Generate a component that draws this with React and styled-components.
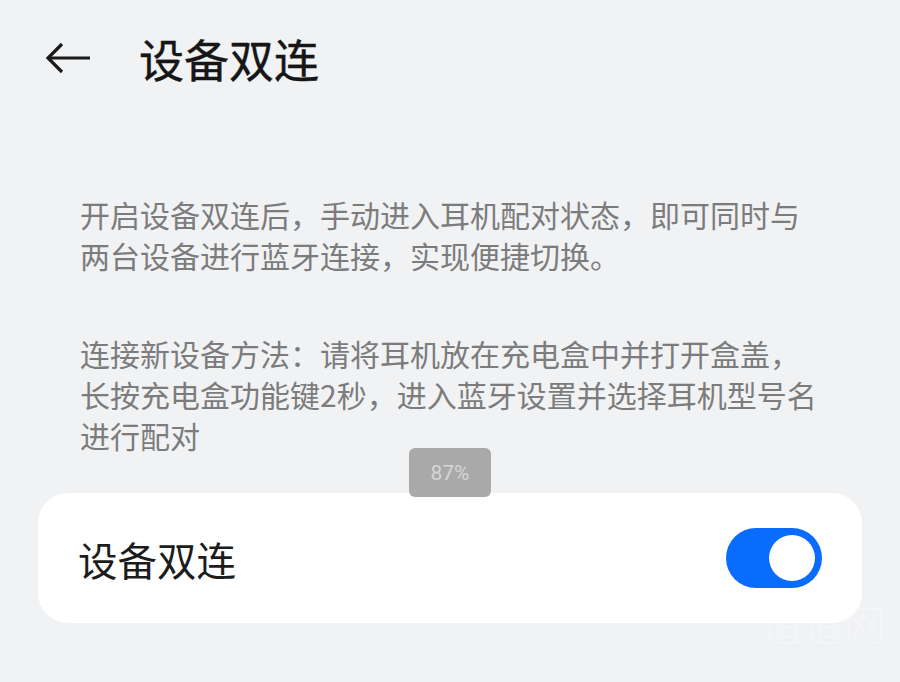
import React from "react";
import styled, { createGlobalStyle } from "styled-components";

const Global = createGlobalStyle`
  html, body { margin: 0; padding: 0; background: #f1f2f4; }
  body { font-family: "Noto Sans CJK SC", "Noto Sans", sans-serif; }
`;

const Page = styled.div`
  position: relative;
  width: 900px;
  height: 682px;
  background: #f1f2f4;
  overflow: hidden;
  display: flex;
  flex-direction: column;
`;

const Header = styled.header`
  height: 116px;
  display: flex;
  align-items: center;
  padding-left: 44px;
  gap: 45px;
`;

const BackButton = styled.button`
  border: 0;
  background: none;
  padding: 0;
  width: 50px;
  height: 40px;
  display: flex;
  align-items: center;
  color: #1a1a1a;
`;

const Title = styled.h1`
  margin: 0;
  font-size: 45px;
  font-weight: 400;
  color: #161616;
  line-height: 1;
  -webkit-text-stroke: 0.4px #161616;
`;

const Description = styled.p`
  margin: ${(p) => p.$top}px 0 0 80px;
  width: 745px;
  font-size: 30px;
  line-height: 41px;
  color: #7c7c7c;
  font-weight: 400;
`;

const Card = styled.div`
  position: relative;
  margin: ${(p) => p.$top}px 38px 0 38px;
  height: 130px;
  background: #ffffff;
  border-radius: 30px;
  display: flex;
  align-items: center;
  justify-content: space-between;
  padding: 0 40px 0 40px;
`;

const Label = styled.span`
  font-size: 39.5px;
  font-weight: 400;
  color: #1c1c1c;
`;

const Toggle = styled.div`
  width: 96px;
  height: 60px;
  border-radius: 30px;
  background: ${(p) => (p.$on ? "#0a6bff" : "#cfd1d5")};
  display: flex;
  align-items: center;
  justify-content: ${(p) => (p.$on ? "flex-end" : "flex-start")};
  padding: 0 7px;
  box-sizing: border-box;
`;

const Knob = styled.div`
  width: 46px;
  height: 46px;
  border-radius: 50%;
  background: #ffffff;
`;

const Toast = styled.div`
  position: absolute;
  left: 409px;
  top: 448px;
  width: 82px;
  height: 49px;
  border-radius: 6px;
  background: #a9a9a9;
  color: #d6d6d6;
  font-family: Roboto, "Noto Sans", sans-serif;
  font-size: 21px;
  display: flex;
  align-items: center;
  justify-content: center;
  z-index: 2;
`;

const Watermark = styled.div`
  position: absolute;
  left: 760px;
  top: 592px;
  font-size: 42px;
  color: rgba(255, 255, 255, 0.3);
  font-weight: 300;
`;

export default function App() {
  return (
    <Page>
      <Global />
      <Header>
        <BackButton aria-label="back">
          <svg width="48" height="34" viewBox="0 0 48 34" fill="none">
            <path d="M46 17H5" stroke="#1a1a1a" strokeWidth="3.2" />
            <path d="M18 3L4 17L18 31" stroke="#1a1a1a" strokeWidth="3.2" strokeLinejoin="miter" />
          </svg>
        </BackButton>
        <Title>设备双连</Title>
      </Header>
      <Watermark>追追网</Watermark>
      <Description $top={78}>
        开启设备双连后，手动进入耳机配对状态，即可同时与两台设备进行蓝牙连接，实现便捷切换。
      </Description>
      <Description $top={57}>
        连接新设备方法：请将耳机放在充电盒中并打开盒盖，长按充电盒功能键2秒，进入蓝牙设置并选择耳机型号名进行配对
      </Description>
      <Card $top={37}>
        <Label>设备双连</Label>
        <Toggle $on>
          <Knob />
        </Toggle>
      </Card>
      <Toast>87%</Toast>
    </Page>
  );
}
